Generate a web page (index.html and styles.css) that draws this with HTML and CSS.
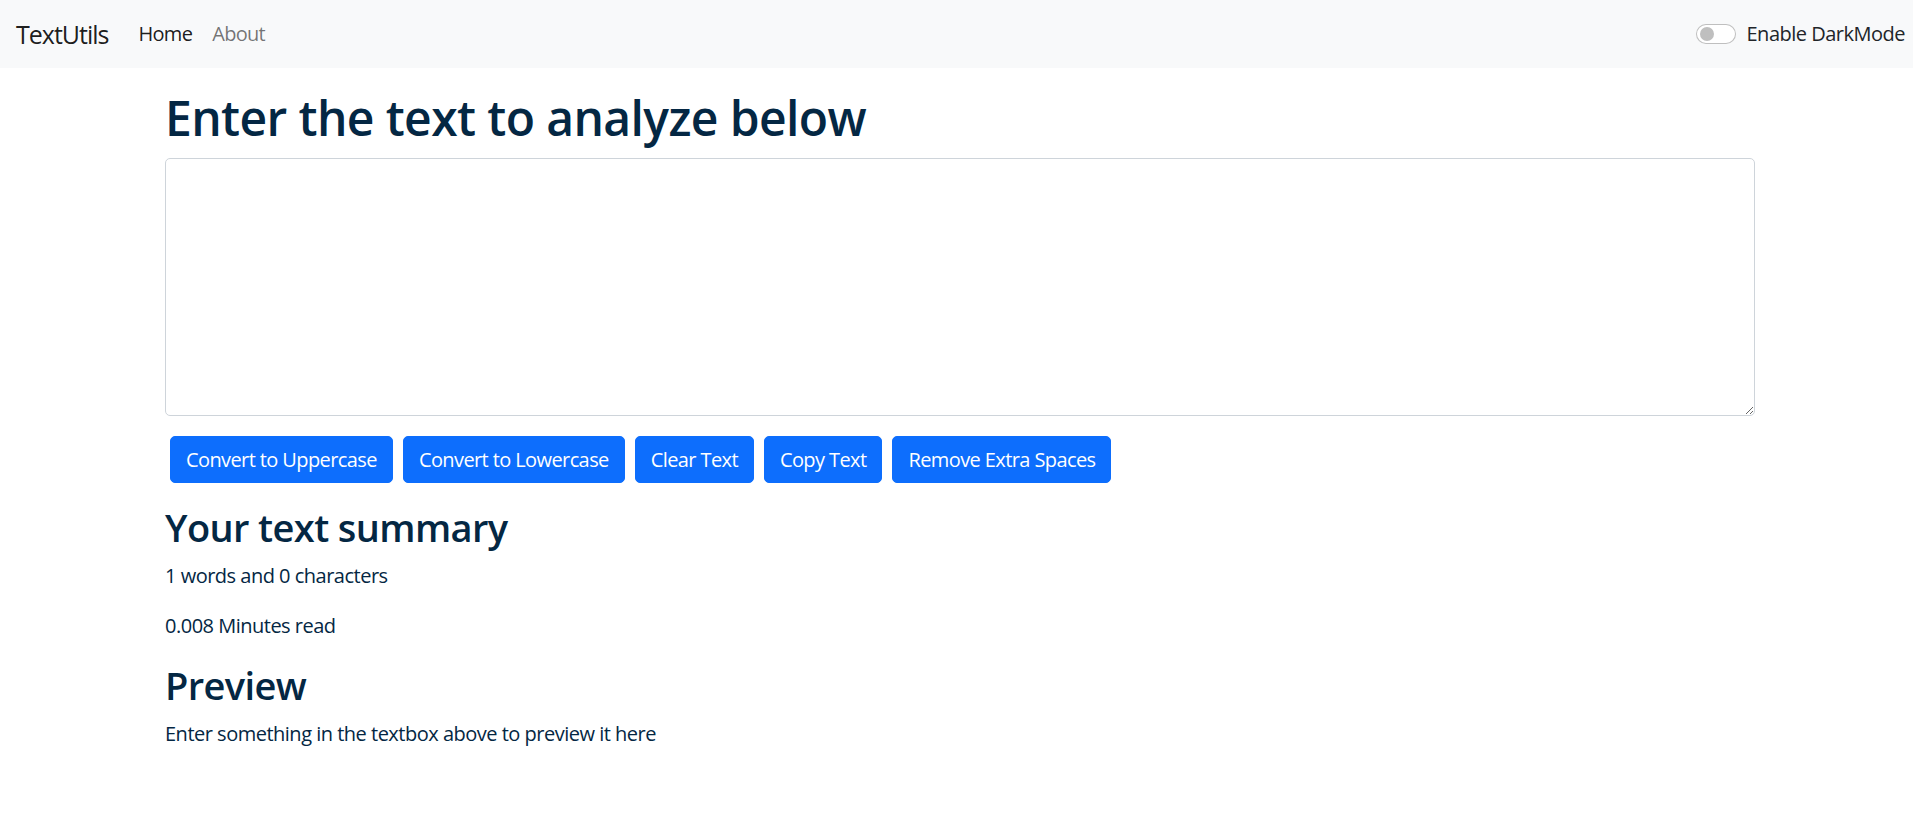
FILE: index.html
```html
<!DOCTYPE html>
<html lang="en">
<head>
<meta charset="utf-8">
<title>TextUtils</title>
<link rel="stylesheet" href="styles.css">
</head>
<body>
<nav class="navbar">
  <div class="nav-left">
    <a class="brand" href="#">TextUtils</a>
    <ul class="nav-links">
      <li><a class="nav-link active" href="#">Home</a></li>
      <li><a class="nav-link" href="#">About</a></li>
    </ul>
  </div>
  <label class="switch">
    <span class="switch-track"><span class="switch-knob"></span></span>
    <span class="switch-label">Enable DarkMode</span>
  </label>
</nav>

<main class="container first">
  <h1 class="title">Enter the text to analyze below</h1>
  <div class="field">
    <textarea class="textbox" rows="8"></textarea>
  </div>
  <div class="actions">
    <button class="btn">Convert to Uppercase</button>
    <button class="btn">Convert to Lowercase</button>
    <button class="btn">Clear Text</button>
    <button class="btn">Copy Text</button>
    <button class="btn">Remove Extra Spaces</button>
  </div>
</main>

<section class="container second">
  <h2 class="subtitle">Your text summary</h2>
  <p class="text">1 words and 0 characters</p>
  <p class="text">0.008 Minutes read</p>
  <h2 class="subtitle">Preview</h2>
  <p class="text">Enter something in the textbox above to preview it here</p>
</section>
</body>
</html>
```

FILE: styles.css
```css
* { box-sizing: border-box; }

html, body {
  margin: 0;
  padding: 0;
  background: #ffffff;
  font-family: "Open Sans", "Noto Sans", sans-serif;
  font-size: 20px;
  line-height: 1.5;
  letter-spacing: -0.5px;
  color: #212529;
}

.navbar {
  height: 68px;
  background: #f8f9fa;
  display: flex;
  align-items: center;
  justify-content: space-between;
  padding: 0 8px 0 16px;
}

.nav-left {
  display: flex;
  align-items: center;
}

.brand {
  font-size: 25px;
  line-height: 37px;
  letter-spacing: -1px;
  color: rgba(0, 0, 0, 0.9);
  text-decoration: none;
  margin-right: 20px;
}

.nav-links {
  display: flex;
  list-style: none;
  margin: 0;
  padding: 0;
}

.nav-link {
  display: block;
  padding: 10px 10px;
  color: rgba(0, 0, 0, 0.55);
  text-decoration: none;
  font-size: 20px;
  line-height: 30px;
  letter-spacing: -0.7px;
}

.nav-link.active {
  color: rgba(0, 0, 0, 0.9);
}

.switch {
  display: flex;
  align-items: center;
  gap: 11px;
  color: #212529;
}

.switch-track {
  width: 40px;
  height: 20px;
  border: 1.25px solid rgba(0, 0, 0, 0.25);
  border-radius: 10px;
  background: #ffffff;
  display: flex;
  align-items: center;
  padding-left: 3px;
}

.switch-knob {
  width: 14px;
  height: 14px;
  border-radius: 50%;
  background: #bfbfbf;
}

.switch-label {
  font-size: 20px;
  line-height: 30px;
}

.container {
  padding: 0 15px 0 165px;
  color: #042743;
}

.first {
  margin-top: 20px;
}

.title {
  margin: 0 0 10px 0;
  font-size: 48px;
  line-height: 60px;
  font-weight: 600;
  letter-spacing: -0.6px;
}

.field {
  margin-bottom: 20px;
}

.textbox {
  display: block;
  width: 1590px;
  height: 258px;
  padding: 7.5px 15px;
  border: 1.25px solid #ced4da;
  border-radius: 5px;
  font-family: inherit;
  font-size: 20px;
  resize: vertical;
  background: #ffffff;
}

.actions {
  display: flex;
  flex-wrap: wrap;
  gap: 10px;
  padding-left: 5px;
}

.btn {
  font-family: inherit;
  font-size: 20px;
  line-height: 30px;
  letter-spacing: -0.6px;
  padding: 7.5px 15px;
  color: #ffffff;
  background: #0d6efd;
  border: 1.25px solid #0d6efd;
  border-radius: 5px;
  cursor: pointer;
}

.second {
  margin-top: 19.5px;
}

.subtitle {
  margin: 0 0 10px 0;
  font-size: 38px;
  line-height: 48px;
  font-weight: 600;
  letter-spacing: -0.6px;
}

.text {
  margin: 0 0 20px 0;
  font-size: 20px;
  line-height: 30px;
}
```
